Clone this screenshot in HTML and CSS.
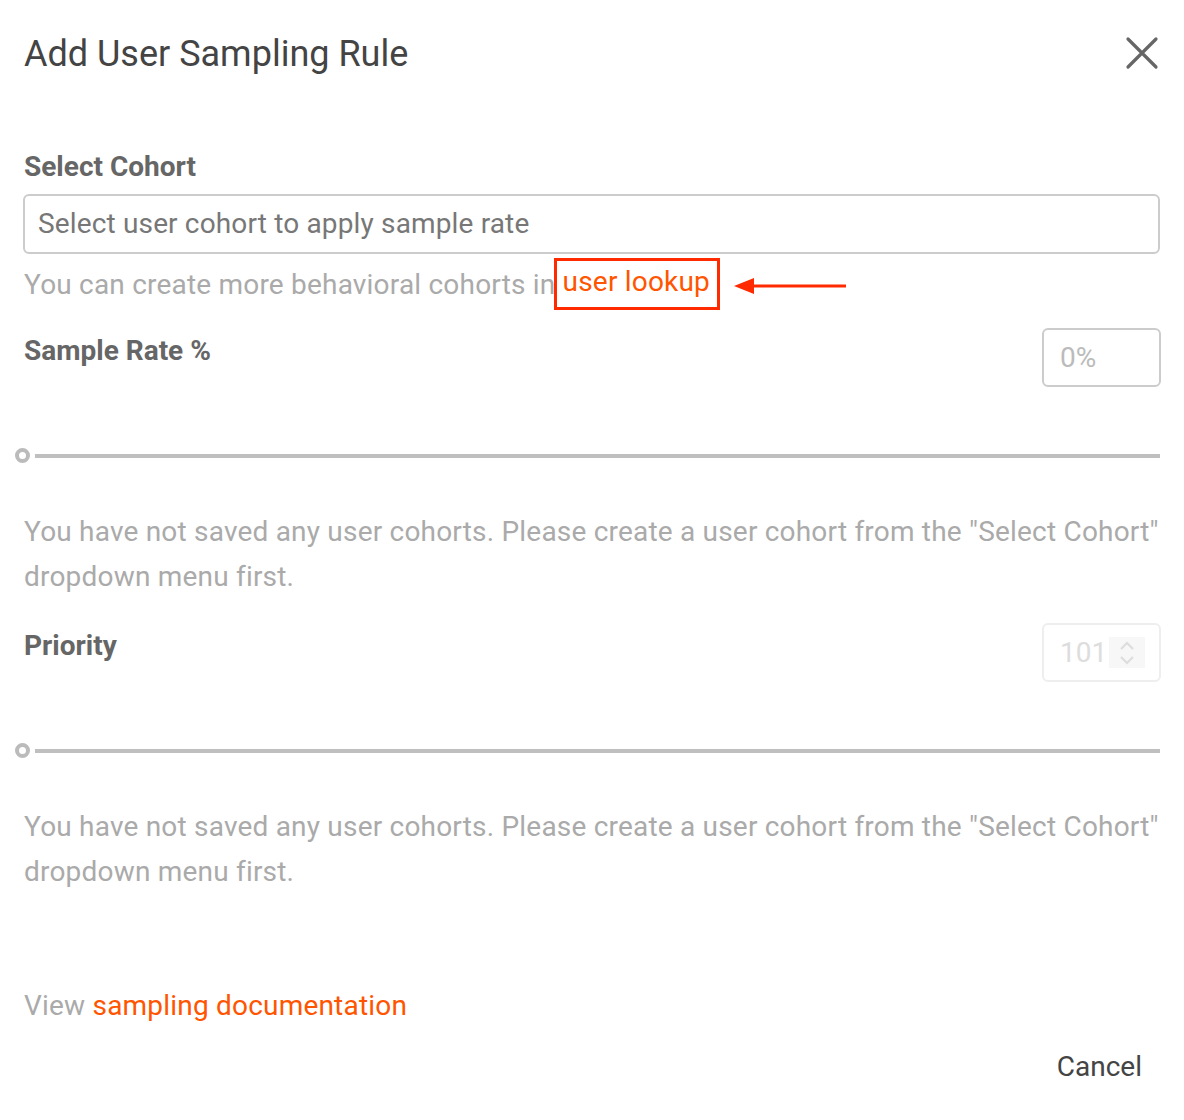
FILE: index.html
```html
<!DOCTYPE html>
<html>
<head>
  <title>Add User Sampling Rule</title>
  <link rel="stylesheet" href="styles.css">
</head>
<body>
  <div class="modal">
    <div class="modal-header">
      <h2 class="modal-title">Add User Sampling Rule</h2>
      <button class="close-btn" aria-label="Close">
        <svg width="34" height="34" viewBox="0 0 34 34">
          <path d="M3 3 L31 31 M31 3 L3 31" stroke="#666" stroke-width="3.2" stroke-linecap="round"/>
        </svg>
      </button>
    </div>

    <div class="field">
      <label class="field-label">Select Cohort</label>
      <div class="select-box">Select user cohort to apply sample rate</div>
      <div class="helper">
        You can create more behavioral cohorts in<span class="highlight"><a href="#" class="link">user lookup</a></span>
        <svg class="arrow" width="116" height="20" viewBox="0 0 116 20">
          <path d="M2 10 L22 2 L22 18 Z" fill="#ff2a00"/>
          <path d="M20 10 H114" stroke="#ff2a00" stroke-width="3"/>
        </svg>
      </div>
    </div>

    <div class="field-row">
      <label class="field-label">Sample Rate %</label>
      <div class="num-box">0%</div>
    </div>
    <div class="slider">
      <span class="handle"></span>
      <span class="track"></span>
    </div>
    <p class="note">You have not saved any user cohorts. Please create a user cohort from the "Select Cohort" dropdown menu first.</p>

    <div class="field-row priority">
      <label class="field-label">Priority</label>
      <div class="num-box disabled">
        <span>101</span>
        <span class="spinner">
          <svg width="18" height="30" viewBox="0 0 18 30">
            <path d="M3 11 L9 5 L15 11 M3 19 L9 25 L15 19" stroke="#ddd" stroke-width="2" fill="none"/>
          </svg>
        </span>
      </div>
    </div>
    <div class="slider">
      <span class="handle"></span>
      <span class="track"></span>
    </div>
    <p class="note">You have not saved any user cohorts. Please create a user cohort from the "Select Cohort" dropdown menu first.</p>

    <p class="docs">View <a href="#" class="link">sampling documentation</a></p>

    <div class="footer">
      <button class="cancel-btn">Cancel</button>
    </div>
  </div>
</body>
</html>
```

FILE: styles.css
```css
body {
  margin: 0;
  background-color: #fff;
  font-family: Roboto, "Liberation Sans", Arial, sans-serif;
  color: #666;
}

.modal {
  width: 1136px;
  padding: 0 24px 0 24px;
}

.modal-header {
  display: flex;
  justify-content: space-between;
  align-items: center;
  height: 110px;
}

.modal-title {
  margin: 0;
  font-size: 36px;
  font-weight: 400;
  color: #444;
  position: relative;
  top: -1px;
}

.close-btn {
  border: none;
  background: none;
  padding: 0;
  margin-right: 1px;
  cursor: pointer;
  display: flex;
  position: relative;
  top: -2px;
}

.field-label {
  display: block;
  font-size: 28px;
  font-weight: 700;
  color: #666;
}

.field {
  padding-top: 40px;
}

.field .field-label {
  margin-bottom: 11px;
}

.select-box {
  border: 2px solid #ccc;
  border-radius: 6px;
  height: 56px;
  line-height: 56px;
  padding: 0 13px;
  font-size: 28px;
  letter-spacing: 0.15px;
  color: #777;
  margin-left: -1px;
}

.helper {
  display: flex;
  align-items: center;
  font-size: 28px;
  letter-spacing: 0.2px;
  color: #aaa;
  height: 56px;
  margin-top: 2px;
}

.highlight {
  border: 3px solid #ff2a00;
  padding: 4px 7px 8px 6px;
  margin-left: -2px;
  line-height: 1.2;
}

.link {
  color: #ff5500;
  text-decoration: none;
}

.arrow {
  margin-left: 12px;
  margin-top: 3px;
}

.field-row {
  display: flex;
  justify-content: space-between;
  align-items: flex-start;
  margin-top: 16px;
}

.field-row.priority {
  margin-top: 24px;
}

.field-row .field-label {
  margin-top: 6px;
}

.num-box {
  width: 115px;
  height: 55px;
  border: 2px solid #ccc;
  border-radius: 6px;
  box-sizing: content-box;
  font-size: 28px;
  color: #bbb;
  display: flex;
  align-items: center;
  text-indent: 16px;
  margin-right: -1px;
}

.num-box.disabled {
  border-color: #eee;
  color: #ddd;
  text-indent: 0;
}

.num-box.disabled span:first-child {
  padding-left: 16px;
}

.spinner {
  display: flex;
  align-items: center;
  justify-content: center;
  background-color: #f7f7f7;
  width: 36px;
  height: 31px;
  margin-left: 2px;
}

.slider {
  display: flex;
  align-items: center;
  margin-top: 61px;
  margin-left: -9px;
}

.handle {
  width: 7px;
  height: 7px;
  border: 4px solid #bbb;
  border-radius: 50%;
  flex-shrink: 0;
}

.track {
  flex: 1;
  height: 4px;
  background-color: #bfbfbf;
  margin-left: 5px;
}

.note {
  margin: 46px 0 0 0;
  font-size: 28px;
  letter-spacing: 0.2px;
  line-height: 45px;
  color: #aaa;
}

.docs {
  margin: 95px 0 0 0;
  font-size: 28px;
  letter-spacing: 0.2px;
  color: #aaa;
}

.footer {
  display: flex;
  justify-content: flex-end;
  margin-top: 18px;
}

.cancel-btn {
  border: none;
  background: none;
  font-family: Roboto, "Liberation Sans", Arial, sans-serif;
  font-size: 28px;
  color: #444;
  padding: 10px 16px;
  margin-right: 2px;
  cursor: pointer;
}
```
